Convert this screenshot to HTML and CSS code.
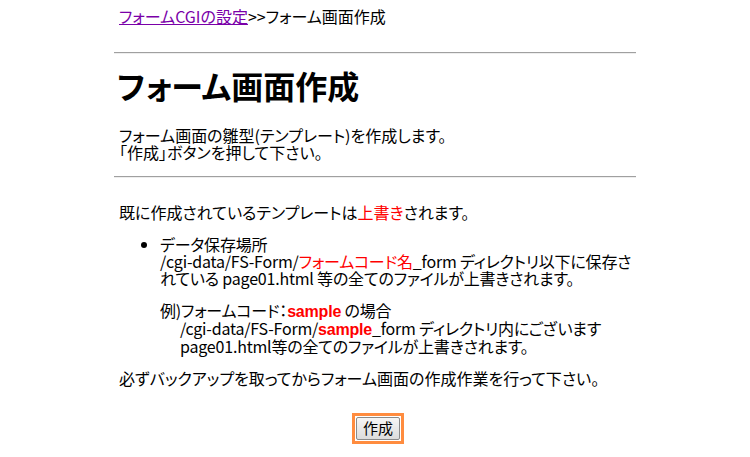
FILE: index.html
```html
<!DOCTYPE html>
<html lang="ja">
<head>
    <meta charset="UTF-8">
    <title>フォーム画面作成</title>
    <link rel="stylesheet" href="styles.css">
</head>
<body>

<div class="page">
    <div class="crumb"><a href="#">フォームCGIの設定</a>&gt;&gt;フォーム画面作成</div>
    <hr class="rule rule-top">
    <h1>フォーム画面作成</h1>
    <p class="intro">フォーム画面の雛型(テンプレート)を作成します。<br>「作成」ボタンを押して下さい。</p>
    <hr class="rule rule-mid">

    <p class="notice">既に作成されているテンプレートは<span class="red">上書き</span>されます。</p>
    <ul class="info">
        <li>データ保存場所<br>/cgi-data/FS-Form/<span class="red">フォームコード名</span>_form ディレクトリ以下に保存さ<br>れている page01.html 等の全てのファイルが上書きされます。
            <div class="example">
                例)フォームコード：<b class="sample">sample</b> の場合
                <div class="example-body">/cgi-data/FS-Form/<b class="sample">sample</b>_form ディレクトリ内にございます<br>page01.html等の全てのファイルが上書きされます。</div>
            </div>
        </li>
    </ul>
    <p class="backup">必ずバックアップを取ってからフォーム画面の作成作業を行って下さい。</p>

    <form class="actions" onsubmit="event.preventDefault();">
        <span class="btn-frame"><button type="submit" class="btn">作成</button></span>
    </form>
</div>

</body>
</html>
```

FILE: styles.css
```css
body {
    margin: 0;
    background-color: #fff;
    color: #000;
    font-family: "Noto Sans CJK JP", "Liberation Sans", sans-serif;
    font-size: 16px;
    line-height: 17px;
    font-feature-settings: "palt";
}
.page {
    width: 522px;
    margin: 0 auto;
    padding-top: 8px;
}
.crumb {
    padding-left: 5px;
}
.crumb a {
    color: #7a00a8;
}
.rule {
    height: 0;
    margin: 0;
    border: none;
    border-top: 1px solid #a0a0a0;
    border-bottom: 1px solid #eeeeee;
}
.rule-top {
    margin-top: 27px;
}
.rule-mid {
    margin-top: 15px;
}
h1 {
    margin: 13px 0 0 3px;
    font-size: 32px;
    line-height: 36px;
    font-weight: bold;
}
.intro {
    margin: 24px 0 0 5px;
}
.notice {
    margin: 26px 0 0 5px;
}
.red {
    color: #ff0000;
}
.info {
    margin: 15px 0 0 5px;
    padding-left: 41px;
    white-space: nowrap;
    letter-spacing: -0.2px;
}
.example {
    margin-top: 15px;
    line-height: 16.5px;
}
.example-body {
    padding-left: 20px;
}
.sample {
    color: #ff0000;
    font-family: "Liberation Sans", Arial, sans-serif;
    font-weight: bold;
    line-height: 1;
}
.backup {
    margin: 15px 0 0 5px;
}
.actions {
    display: flex;
    justify-content: center;
    margin-top: 26px;
    padding-left: 6px;
}
.btn-frame {
    display: inline-block;
    border: 3px solid #ff8c3f;
    background-color: #fff;
    padding: 1px;
}
.btn {
    display: block;
    height: 23px;
    padding: 0 6px;
    border: 1px solid #8a8a8a;
    border-radius: 2px;
    background: linear-gradient(#f6f6f6, #dcdcdc);
    font-family: "Noto Sans CJK JP", sans-serif;
    font-size: 15px;
    line-height: 20px;
    color: #000;
    cursor: pointer;
}
```
